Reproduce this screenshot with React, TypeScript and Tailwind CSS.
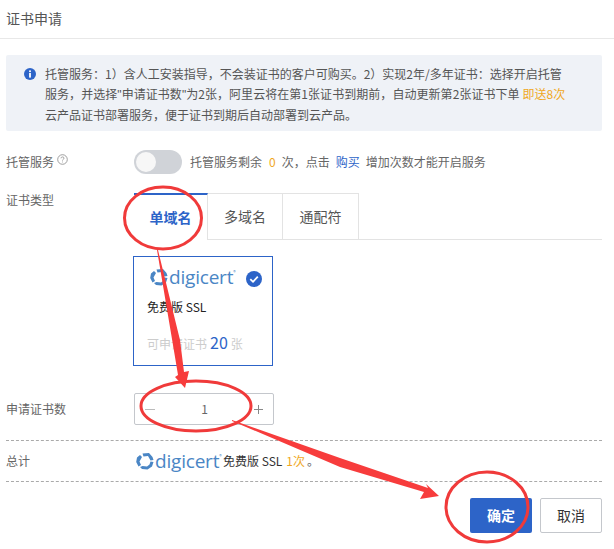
import * as React from "react";

const DigicertLogo = (): React.ReactElement => (
    <div className="flex items-center h-[20px] w-[88px] text-[#4a86c5]">
        <svg width="20" height="20" viewBox="0 0 20 20" fill="none" className="shrink-0">
            <path d="M7.5 2.5 L14 2 L17.5 6 L18.5 9 L15.5 9.5 L13 5 L8.5 5.5 Z" fill="#4a86c5" />
            <path d="M5 4 L7 6 L4.5 10.5 L6 14 L3.5 15.5 L1.2 11 L2 6.5 Z" fill="#4a86c5" />
            <path d="M15.5 10.5 L18.5 11 L17 15.5 L12.5 18.5 L7 18 L5 16 L7.5 15 L12 15.5 L14.5 13.5 Z" fill="#4a86c5" />
        </svg>
        <span className="text-[19px] leading-none font-['Open_Sans',sans-serif] tracking-[-0.2px]">digicert</span>
        <span className="self-start text-[5px] leading-none mt-[2px]">®</span>
    </div>
);

const Annotations = (): React.ReactElement => (
    <svg className="absolute left-0 top-0 pointer-events-none" width="614" height="549" viewBox="0 0 614 549" fill="none">
        <ellipse cx="163" cy="218" rx="38.5" ry="31" stroke="#f03a3a" strokeWidth="3" />
        <ellipse cx="196" cy="406" rx="55" ry="25" stroke="#f03a3a" strokeWidth="3" />
        <ellipse cx="487" cy="507" rx="41" ry="35" stroke="#f03a3a" strokeWidth="3" />
        <path d="M158 250 L180 340 L184 372 L189 371 L185 388 L175 377 L178 375 L173 345 L157 250 Z" fill="#f73c3c" />
        <path d="M232 420 L340 458 L428 488 L426 484 L439 496 L420 499 L424 492 L340 467 L232 421 Z" fill="#f73c3c" />
    </svg>
);

export default function App(): React.ReactElement {
    return (
        <div className="relative w-[614px] h-[549px] bg-white overflow-hidden text-[12px] text-[#666] font-['Noto_Sans_CJK_SC','Noto_Sans_CJK_JP',sans-serif]">
            <div className="h-[39px] border-b border-[#e8e8e8] pl-[6px] pt-[8px] text-[14px] leading-[20px] text-[#555]">证书申请</div>

            <div className="mx-[6px] mt-[16px] h-[76px] w-[596px] bg-[#eff2f7] rounded-[2px] flex pl-[17px] pt-[9px]">
                <svg width="14" height="14" viewBox="0 0 14 14" className="shrink-0 mt-[3px]">
                    <circle cx="7" cy="7" r="6" fill="#2d64c8" />
                    <rect x="6.1" y="6" width="1.8" height="4.6" fill="#fff" />
                    <rect x="6.1" y="3.4" width="1.8" height="1.7" fill="#fff" />
                </svg>
                <div className="ml-[8px] text-[12px] leading-[20px] text-[#555] whitespace-nowrap">
                    <div>托管服务：1）含人工安装指导，不会装证书的客户可购买。2）实现2年/多年证书：选择开启托管</div>
                    <div className="tracking-[0.05px]">
                        服务，并选择<span className="font-['Liberation_Sans']">"</span>申请证书数<span className="font-['Liberation_Sans']">"</span>为2张，阿里云将在第1张证书到期前，自动更新第2张证书下单 <span className="text-[#f0a81e]">即送8次</span>
                    </div>
                    <div>云产品证书部署服务，便于证书到期后自动部署到云产品。</div>
                </div>
            </div>

            <div className="flex items-center mt-[18px] h-[26px] pl-[6px]">
                <div className="w-[128px] flex items-start gap-[3px]">
                    <span>托管服务</span>
                    <svg width="11" height="11" viewBox="0 0 11 11" fill="none" className="mt-[1px]">
                        <circle cx="5.5" cy="5.5" r="4.8" stroke="#888" strokeWidth="0.8" />
                        <path d="M4 4.3 C4 2.5 7 2.5 7 4.2 C7 5.3 5.5 5.3 5.5 6.5 M5.5 7.6 V8.4" stroke="#888" strokeWidth="0.8" />
                    </svg>
                </div>
                <div className="w-[48px] h-[24px] rounded-full bg-[#d0d3d8] p-[2px]">
                    <div className="w-[20px] h-[20px] rounded-full bg-[#f7f7f7]" />
                </div>
                <span className="ml-[8px]">托管服务剩余</span>
                <span className="ml-[7px] text-[#f0a81e]">0</span>
                <span className="ml-[6px]">次，点击</span>
                <span className="ml-[6px] text-[#2d64c8]">购买</span>
                <span className="ml-[6px]">增加次数才能开启服务</span>
            </div>

            <div className="flex mt-[18px] pl-[6px]">
                <div className="w-[128px] leading-[14px]">证书类型</div>
                <div className="w-[468px] flex border-b border-[#e3e3e3] h-[47px]">
                    <div className="w-[74px] h-[47px] border-t-2 border-t-[#2d64c8] border-r border-r-[#e3e3e3] bg-white flex items-center justify-center text-[14px] font-bold text-[#2d64c8]">单域名</div>
                    <div className="w-[75px] border-t border-r border-[#e3e3e3] flex items-center justify-center text-[14px] text-[#555]">多域名</div>
                    <div className="w-[76px] border-t border-r border-[#e3e3e3] flex items-center justify-center text-[14px] text-[#555]">通配符</div>
                </div>
            </div>

            <div className="relative ml-[133px] mt-[16px] w-[140px] h-[110px] border border-[#2d64c8] pl-[15px] pt-[10px]">
                <DigicertLogo />
                <svg width="16" height="16" viewBox="0 0 16 16" className="absolute left-[112px] top-[14px]">
                    <circle cx="8" cy="8" r="8" fill="#2d64c8" />
                    <path d="M4.3 8.2 L7 10.8 L11.8 5.6" stroke="#fff" strokeWidth="1.8" fill="none" />
                </svg>
                <div className="-ml-[2px] mt-[11px] leading-[18px] text-[#222]">免费版 SSL</div>
                <div className="-ml-[2px] mt-[15px] flex items-baseline leading-[22px] text-[#ccc]">
                    可申请证书<span className="mx-[3px] text-[16px] text-[#2d64c8]">20</span>张
                </div>
            </div>

            <div className="flex items-center mt-[27px] pl-[6px]">
                <div className="w-[128px]">申请证书数</div>
                <div className="w-[140px] h-[32px] border border-[#c4c7cc] rounded-[2px] flex items-center justify-between pl-[10px] pr-[10px] text-[#666]">
                    <div className="w-[10px] h-px bg-[#bbb]" />
                    <span>1</span>
                    <svg width="9" height="9" viewBox="0 0 9 9" fill="none">
                        <path d="M0 4.5 H9 M4.5 0 V9" stroke="#888" strokeWidth="1" />
                    </svg>
                </div>
            </div>

            <div className="mx-[6px] mt-[15px] w-[596px] border-t border-dashed border-[#aaa]" />

            <div className="flex items-center h-[40px] pl-[6px]">
                <div className="w-[129px]">总计</div>
                <DigicertLogo />
                <span className="text-[#333]">免费版 SSL</span>
                <span className="ml-[4px] text-[#f0a81e]">1次</span>
                <span className="ml-[2px]">。</span>
            </div>

            <div className="mx-[6px] w-[596px] border-t border-dashed border-[#aaa]" />

            <div className="flex justify-end gap-[8px] w-[602px] mt-[16px]">
                <button className="w-[62px] h-[35px] rounded-[2px] bg-[#2d64c8] text-white font-bold text-[14px]">确定</button>
                <button className="w-[62px] h-[35px] rounded-[2px] border border-[#c4c7cc] bg-white text-[#333] text-[14px]">取消</button>
            </div>

            <Annotations />
        </div>
    );
}
